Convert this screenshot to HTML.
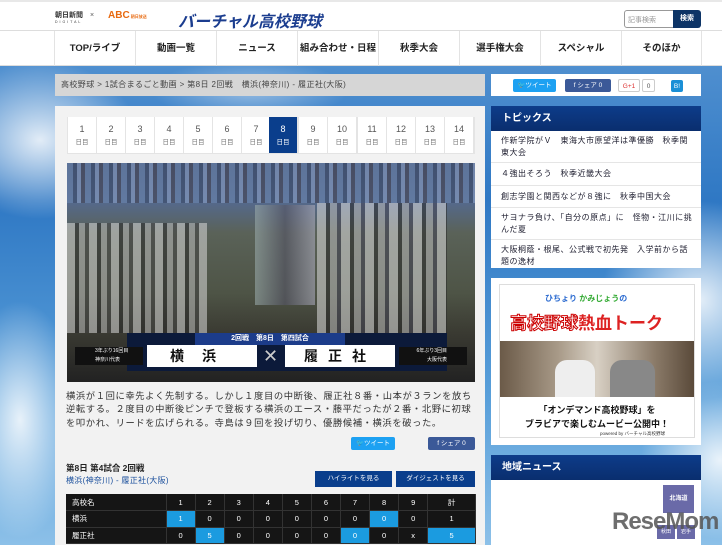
<!DOCTYPE html>
<html><head><meta charset="utf-8"><style>
*{margin:0;padding:0;box-sizing:border-box}
body{width:722px;height:545px;overflow:hidden;font-family:"Liberation Sans","Noto Sans CJK JP",sans-serif;font-size:8px;color:#333;position:relative;
background:linear-gradient(180deg,#4f8fcf 66px,#2f78c4 200px,#5aa0da 400px,#8cc0e8 545px);}
.abs{position:absolute}
.hdr{left:0;top:0;width:722px;height:30px;background:#fff;border-top:2px solid #e8e8e8}
.nav{left:0;top:30px;width:722px;height:36px;background:#fff;border-top:1px solid #ddd;border-bottom:1px solid #ddd}
.nav div{position:absolute;top:0;height:35px;width:81px;border-left:1px solid #e3e3e3;text-align:center;line-height:35px;font-weight:bold;font-size:9.5px;color:#222}
.cloud{border-radius:50%;background:radial-gradient(ellipse,rgba(255,255,255,.85),rgba(255,255,255,0) 70%)}
.box{background:#f2f2f2}
.tab{position:absolute;top:0;width:28px;height:36px;background:#fff;text-align:center;color:#555;font-size:9px;padding-top:6px;line-height:12px}
.tab span{font-size:6.5px;color:#777}
.sb{position:absolute;height:13px;font-size:6.5px;color:#fff;line-height:13px;text-align:center;border-radius:2px}
table{border-collapse:collapse}
td{height:16.5px;text-align:center;color:#fff;font-size:7.5px;background:#151515;border-right:1px solid #333;border-bottom:1px solid #333}
td.hl{background:#1b9be0}
.side{background:#fff}
.sh{background:linear-gradient(180deg,#0d3c8a,#0a2e6e);color:#fff;font-weight:bold;font-size:10px;padding-left:11px;line-height:25px}
.li{border-bottom:1px solid #e5e5e5;padding:4px 8px 4px 10px;font-size:8px;letter-spacing:.5px;line-height:11.5px;color:#223}
</style></head><body>
<div class="abs cloud" style="left:-60px;top:60px;width:200px;height:160px"></div>
<div class="abs cloud" style="left:-40px;top:300px;width:120px;height:240px"></div>
<div class="abs cloud" style="left:600px;top:200px;width:200px;height:200px"></div>
<div class="abs cloud" style="left:640px;top:380px;width:160px;height:160px"></div>
<div class="abs cloud" style="left:150px;top:60px;width:200px;height:60px;opacity:.5"></div>

<div class="abs hdr">
 <div class="abs" style="left:55px;top:8px;font-size:7px;font-weight:bold;color:#333">朝日新聞<div style="font-size:3.5px;letter-spacing:2px;font-weight:normal">DIGITAL</div></div>
 <div class="abs" style="left:90px;top:10px;font-size:7px;color:#555">×</div>
 <div class="abs" style="left:108px;top:8px;font-size:10px;font-weight:bold;color:#e86a10">ABC<span style="font-size:4px;color:#e86a10"> 朝日放送</span></div>
 <div class="abs" style="left:178px;top:6px;font-size:16px;font-weight:bold;font-style:italic;color:#1b3d8f">バーチャル高校野球</div>
 <div class="abs" style="left:624px;top:8px;width:50px;height:18px;border:1px solid #999;border-radius:3px 0 0 3px;font-size:7px;color:#999;padding:4px 3px">記事検索</div>
 <div class="abs" style="left:673px;top:8px;width:28px;height:18px;background:#0d3466;color:#fff;font-size:7px;font-weight:bold;text-align:center;line-height:18px;border-radius:0 3px 3px 0">検索</div>
</div>
<div class="abs nav">
 <div style="left:54px">TOP/ライブ</div><div style="left:135px">動画一覧</div><div style="left:216px">ニュース</div><div style="left:297px">組み合わせ・日程</div><div style="left:378px">秋季大会</div><div style="left:459px">選手権大会</div><div style="left:540px">スペシャル</div><div style="left:621px;border-right:1px solid #e3e3e3">そのほか</div>
</div>

<div class="abs" style="left:55px;top:74px;width:430px;height:22px;background:#d6d6d6;font-size:8px;letter-spacing:.4px;color:#444;line-height:22px;padding-left:6px">高校野球 &gt; 1試合まるごと動画 &gt; 第8日 2回戦　横浜(神奈川) - 履正社(大阪)</div>

<div class="abs box" style="left:55px;top:106px;width:430px;height:439px"></div>
<div class="abs" style="left:67px;top:117px;width:408px;height:37px;background:#e4e4e4">
 <div class="tab" style="left:1px">1<br><span>日目</span></div><div class="tab" style="left:30px">2<br><span>日目</span></div><div class="tab" style="left:59px">3<br><span>日目</span></div><div class="tab" style="left:88px">4<br><span>日目</span></div><div class="tab" style="left:117px">5<br><span>日目</span></div><div class="tab" style="left:146px">6<br><span>日目</span></div><div class="tab" style="left:175px">7<br><span>日目</span></div>
 <div class="tab" style="left:202px;background:#0a3e8c;color:#fff">8<br><span style="color:#fff">日目</span></div>
 <div class="tab" style="left:232px">9<br><span>日目</span></div><div class="tab" style="left:261px">10<br><span>日目</span></div><div class="tab" style="left:291px">11<br><span>日目</span></div><div class="tab" style="left:320px">12<br><span>日目</span></div><div class="tab" style="left:349px">13<br><span>日目</span></div><div class="tab" style="left:378px">14<br><span>日目</span></div>
</div>

<div class="abs" style="left:67px;top:163px;width:408px;height:219px;overflow:hidden;background:linear-gradient(180deg,#4a5a78 0,#55698a 40px,#5a6258 70px,#4e5446 130px,#3a3a32 170px,#222 219px)">
 <div class="abs" style="left:0;top:0;width:408px;height:40px;background:repeating-linear-gradient(90deg,#6a85b0 0 6px,#3a4a6a 6px 10px,#8aa0c8 10px 14px,#445 14px 18px);opacity:.6"></div>
 <div class="abs" style="left:0;top:60px;width:140px;height:110px;background:repeating-linear-gradient(90deg,#d8d8d8 0 8px,#2a2a2a 8px 12px,#bbb 12px 18px,#444 18px 22px);opacity:.55"></div>
 <div class="abs" style="left:188px;top:42px;width:60px;height:100px;background:linear-gradient(90deg,#9aa,#556,#aab);opacity:.6"></div>
 <div class="abs" style="left:250px;top:40px;width:130px;height:130px;background:repeating-linear-gradient(90deg,#ddd 0 9px,#2a2a2a 9px 13px,#bbb 13px 20px,#445 20px 24px);opacity:.55"></div>
 <div class="abs" style="left:60px;top:170px;width:320px;height:38px;background:#0c1a3a"></div>
 <div class="abs" style="left:128px;top:170px;width:150px;height:12px;background:#1c3c8a;color:#fff;font-size:7px;font-weight:bold;line-height:12px;text-align:center">2回戦　第8日　第四試合</div>
 <div class="abs" style="left:80px;top:182px;width:110px;height:22px;background:#fff;color:#111;font-size:14px;font-weight:bold;text-align:center;line-height:22px;letter-spacing:18px">横浜</div>
 <div class="abs" style="left:196px;top:182px;width:18px;height:22px;color:#ccc;font-size:18px;line-height:22px">✕</div>
 <div class="abs" style="left:218px;top:182px;width:110px;height:22px;background:#fff;color:#111;font-size:14px;font-weight:bold;text-align:center;line-height:22px;letter-spacing:10px">履正社</div>
 <div class="abs" style="left:8px;top:184px;width:68px;height:18px;background:#111;color:#fff;font-size:5px;line-height:9px;padding-left:20px">3年ぶり16回目<br>神奈川代表</div>
 <div class="abs" style="left:332px;top:184px;width:68px;height:18px;background:#111;color:#fff;font-size:5px;line-height:9px;text-align:right;padding-right:20px">6年ぶり3回目<br>大阪代表</div>
</div>

<div class="abs" style="left:66px;top:390px;width:420px;white-space:nowrap;font-size:9.3px;letter-spacing:.6px;line-height:13.3px;color:#333">横浜が１回に幸先よく先制する。しかし１度目の中断後、履正社８番・山本が３ランを放ち<br>逆転する。２度目の中断後ピンチで登板する横浜のエース・藤平だったが２番・北野に初球<br>を叩かれ、リードを広げられる。寺島は９回を投げ切り、優勝候補・横浜を破った。</div>
<div class="sb" style="left:351px;top:437px;width:44px;background:#1da1f2">🐦ツイート</div>
<div class="sb" style="left:428px;top:437px;width:47px;background:#3b5998">f シェア 0</div>

<div class="abs" style="left:66px;top:462px;font-size:8.5px;font-weight:bold;color:#222">第8日 第4試合 2回戦</div>
<div class="abs" style="left:66px;top:475px;font-size:8px;letter-spacing:.3px;color:#1a4f9c">横浜(神奈川) - 履正社(大阪)</div>
<div class="sb" style="left:315px;top:471px;width:77px;height:16px;line-height:16px;background:#0a3e8c;border-radius:0">ハイライトを見る</div>
<div class="sb" style="left:396px;top:471px;width:79px;height:16px;line-height:16px;background:#0a3e8c;border-radius:0">ダイジェストを見る</div>

<table class="abs" style="left:66px;top:494px;width:410px">
<tr><td style="width:100px;text-align:left;padding-left:6px">高校名</td><td>1</td><td>2</td><td>3</td><td>4</td><td>5</td><td>6</td><td>7</td><td>8</td><td>9</td><td>計</td></tr>
<tr><td style="text-align:left;padding-left:6px">横浜</td><td class="hl">1</td><td>0</td><td>0</td><td>0</td><td>0</td><td>0</td><td>0</td><td class="hl">0</td><td>0</td><td>1</td></tr>
<tr><td style="text-align:left;padding-left:6px">履正社</td><td>0</td><td class="hl">5</td><td>0</td><td>0</td><td>0</td><td>0</td><td class="hl">0</td><td>0</td><td>x</td><td class="hl">5</td></tr>
</table>

<div class="abs side" style="left:491px;top:74px;width:210px;height:22px">
 <div class="sb" style="left:22px;top:5px;width:43px;background:#1da1f2">🐦ツイート</div>
 <div class="sb" style="left:74px;top:5px;width:46px;background:#3b5998">f シェア 0</div>
 <div class="sb" style="left:127px;top:5px;width:22px;background:#fff;border:1px solid #ccc;color:#d33">G+1</div>
 <div class="sb" style="left:151px;top:5px;width:13px;background:#fff;border:1px solid #ccc;color:#555">0</div>
 <div class="sb" style="left:180px;top:6px;width:12px;height:12px;background:#1a8fd6">B!</div>
</div>

<div class="abs side" style="left:491px;top:106px;width:210px;height:162px;overflow:hidden">
 <div class="sh">トピックス</div>
 <div class="li">作新学院がＶ　東海大市原望洋は準優勝　秋季関東大会</div>
 <div class="li" style="padding:5px 8px 5px 10px">４強出そろう　秋季近畿大会</div>
 <div class="li" style="padding:5px 8px 5px 10px">創志学園と関西などが８強に　秋季中国大会</div>
 <div class="li">サヨナラ負け、「自分の原点」に　怪物・江川に挑んだ夏</div>
 <div class="li" style="border:0">大阪桐蔭・根尾、公式戦で初先発　入学前から話題の逸材</div>
</div>

<div class="abs side" style="left:491px;top:278px;width:210px;height:167px">
 <div class="abs" style="left:8px;top:6px;width:196px;height:154px;border:1px solid #ddd;background:#fff">
  <div class="abs" style="left:45px;top:8px;font-size:8px;font-weight:bold;color:#2a6ad0">ひちょり <span style="color:#3a3">かみじょう</span>の</div>
  <div class="abs" style="left:10px;top:24px;font-size:17px;font-weight:bold;color:#fff;-webkit-text-stroke:1px #c00">高校野球<span style="color:#d22;-webkit-text-stroke:0">熱血トーク</span></div>
  <div class="abs" style="left:0;top:56px;width:194px;height:56px;background:linear-gradient(90deg,#6b5a48,#a89a88 30%,#d8d0c4 50%,#8a7a68 80%,#5a4a3a)"></div>
  <div class="abs" style="left:55px;top:75px;width:40px;height:37px;background:#eee;border-radius:12px 12px 0 0"></div>
  <div class="abs" style="left:110px;top:75px;width:45px;height:37px;background:#888;border-radius:12px 12px 0 0"></div>
  <div class="abs" style="left:0;top:118px;width:194px;text-align:center;font-size:9px;font-weight:bold;color:#111;line-height:14px">「オンデマンド高校野球」を<br>ブラビアで楽しむムービー公開中！</div>
  <div class="abs" style="left:100px;top:146px;font-size:4.5px;color:#333">powered by バーチャル高校野球</div>
 </div>
</div>

<div class="abs side" style="left:491px;top:455px;width:210px;height:90px">
 <div class="sh">地域ニュース</div>
 <div class="abs" style="left:172px;top:30px;width:31px;height:28px;background:#6a6aa8;color:#fff;font-size:6px;font-weight:bold;text-align:center;line-height:28px">北海道</div>
 <div class="abs" style="left:166px;top:70px;width:18px;height:14px;background:#6a6aa8;color:#fff;font-size:5px;text-align:center;line-height:14px">秋田</div>
 <div class="abs" style="left:186px;top:70px;width:18px;height:14px;background:#6a6aa8;color:#fff;font-size:5px;text-align:center;line-height:14px">岩手</div>
</div>
<div class="abs" style="left:612px;top:508px;font-size:24px;font-weight:bold;color:#555;letter-spacing:-1px;opacity:.85">ReseMom</div>
</body></html>
